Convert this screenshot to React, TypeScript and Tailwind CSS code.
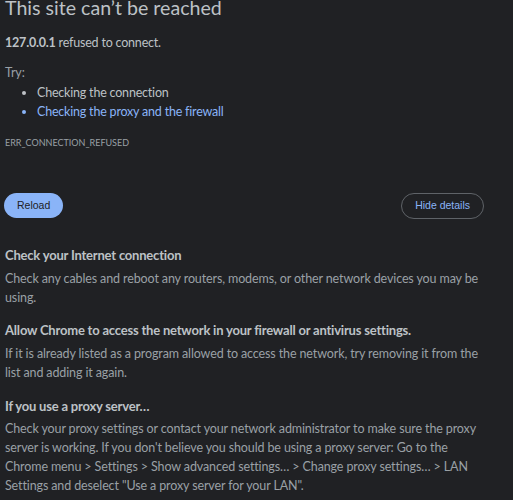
export default function App() {
  const heading = "text-[13px] font-bold leading-[19px] tracking-[-0.2px] text-[#bdc1c6]";
  const body = "text-[12.5px] leading-[19px] tracking-[-0.12px] text-[#9aa0a6]";
  return (
    <div className="h-[500px] w-[513px] overflow-hidden bg-[#202124] px-[5px] font-['Lato',sans-serif]">
      <h1 className="mt-[-5px] text-[19.6px] leading-[26px] font-normal text-[#bdc1c6]">
        This site can’t be reached
      </h1>

      <p className="mt-[12px] text-[12.5px] leading-[19px] tracking-[-0.2px] text-[#bdc1c6]">
        <span className="font-bold">127.0.0.1</span> refused to connect.
      </p>

      <p className={`mt-[11px] ${body}`}>Try:</p>
      <ul className="mt-[1px] list-disc pl-[32px] text-[12.5px] leading-[19px] tracking-[-0.2px] text-[#bdc1c6]">
        <li>Checking the connection</li>
        <li className="text-[#8ab4f8]">Checking the proxy and the firewall</li>
      </ul>

      <p className="mt-[14px] text-[9px] leading-[16px] text-[#9aa0a6]">ERR_CONNECTION_REFUSED</p>

      <div className="mt-[42px] flex items-start justify-between pr-[24px]">
        <button
          type="button"
          className="ml-[-1px] h-[25px] rounded-full bg-[#8ab4f8] px-[13px] font-['Liberation_Sans',sans-serif] text-[10.5px] text-[#202124]"
        >
          Reload
        </button>
        <button
          type="button"
          className="h-[26px] rounded-full border border-[#5f6368] px-[13px] font-['Liberation_Sans',sans-serif] text-[10.5px] text-[#8ab4f8]"
        >
          Hide details
        </button>
      </div>

      <div className="mt-[27px]">
        <h2 className={heading}>Check your Internet connection</h2>
        <p className={`mt-[4px] ${body}`}>
          Check any cables and reboot any routers, modems, or other network devices you may be
          <br />
          using.
        </p>
      </div>

      <div className="mt-[14px]">
        <h2 className={heading}>Allow Chrome to access the network in your firewall or antivirus settings.</h2>
        <p className={`mt-[4px] ${body}`}>
          If it is already listed as a program allowed to access the network, try removing it from the
          <br />
          list and adding it again.
        </p>
      </div>

      <div className="mt-[15px]">
        <h2 className={heading}>If you use a proxy server…</h2>
        <p className={`mt-[3px] ${body}`}>
          Check your proxy settings or contact your network administrator to make sure the proxy
          <br />
          server is working. If you don't believe you should be using a proxy server: Go to the
          <br />
          Chrome menu &gt; Settings &gt; Show advanced settings… &gt; Change proxy settings… &gt; LAN
          <br />
          Settings and deselect "Use a proxy server for your LAN".
        </p>
      </div>
    </div>
  );
}
